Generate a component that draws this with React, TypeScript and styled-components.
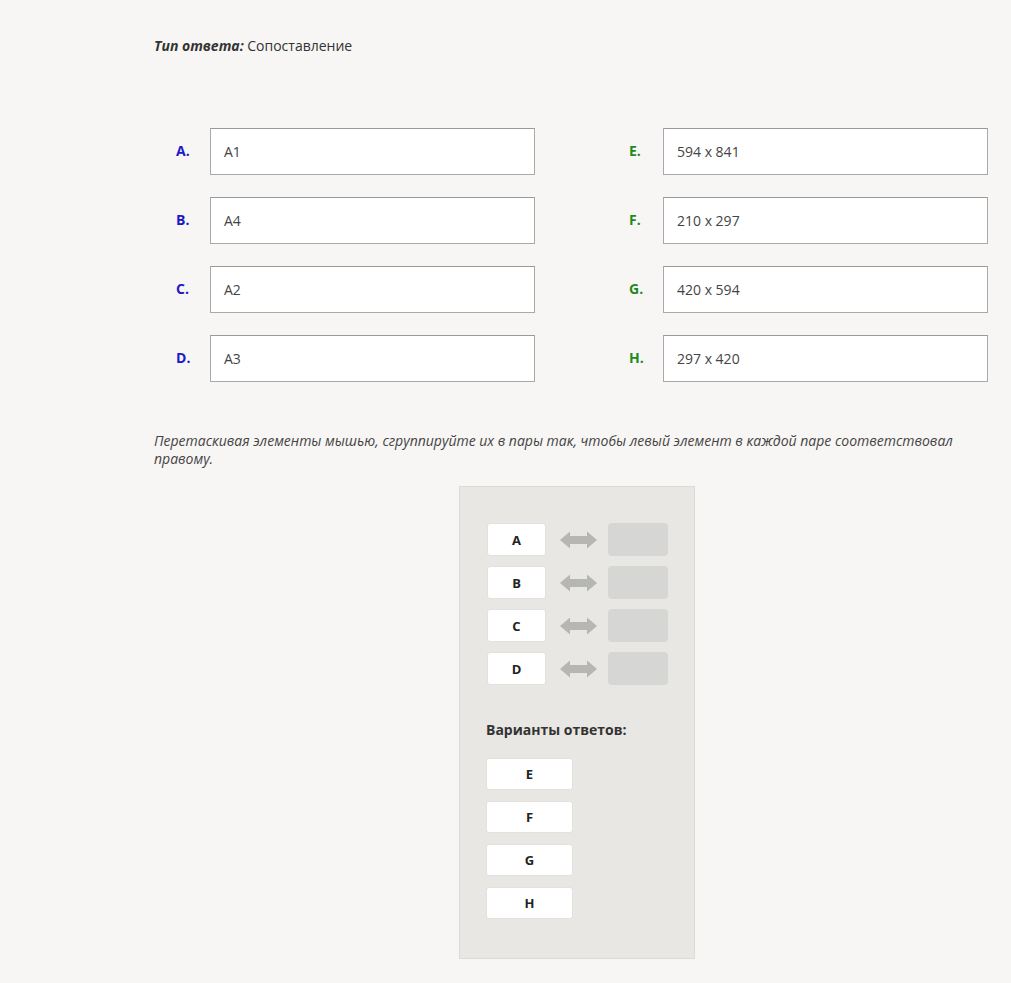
import React from "react";
import styled, { createGlobalStyle } from "styled-components";

const GlobalStyle = createGlobalStyle`
  html, body {
    margin: 0;
    padding: 0;
    background: #f7f6f4;
  }
  body {
    font-family: "Open Sans", "Liberation Sans", sans-serif;
    color: #333;
  }
`;

const Page = styled.div`
  width: 1011px;
  padding: 37px 0 24px 154px;
  box-sizing: border-box;
`;

const AnswerType = styled.div`
  font-size: 14px;
  line-height: 18px;
  color: #333;

  & > b {
    font-style: italic;
    font-weight: 700;
  }
`;

const Options = styled.div`
  display: grid;
  grid-template-columns: 381px 381px;
  column-gap: 72px;
  row-gap: 22px;
  margin-top: 73px;
`;

const Option = styled.div`
  display: flex;
  align-items: center;
  padding-left: 22px;
`;

const Letter = styled.span<{ $tone: "left" | "right" }>`
  width: 34px;
  margin-top: -2px;
  font-size: 14px;
  font-weight: 700;
  color: ${(p) => (p.$tone === "left" ? "#1a1ac8" : "#1e8a1e")};
`;

const Field = styled.div`
  flex: 1;
  height: 47px;
  box-sizing: border-box;
  border: 1px solid #a9a9a9;
  border-top-color: #9a9a9a;
  background: #fff;
  display: flex;
  align-items: center;
  padding-left: 13px;
  font-size: 14px;
  color: #444;
`;

const Hint = styled.p`
  margin: 50px 0 0;
  width: 805px;
  font-size: 14px;
  line-height: 18px;
  font-style: italic;
  color: #444;
`;

const Board = styled.div`
  width: 236px;
  margin: 18px 0 0 305px;
  box-sizing: border-box;
  background: #e8e7e4;
  border: 1px solid #dcdbd8;
  padding: 36px 0 39px 27px;
`;

const Pairs = styled.div`
  display: flex;
  flex-direction: column;
  gap: 10px;
`;

const Pair = styled.div`
  display: flex;
  align-items: center;
`;

const Chip = styled.div<{ $w: number; $h: number }>`
  width: ${(p) => p.$w}px;
  height: ${(p) => p.$h}px;
  box-sizing: border-box;
  background: #fff;
  border: 1px solid #e2e1de;
  border-radius: 3px;
  display: flex;
  align-items: center;
  justify-content: center;
  font-size: 13px;
  font-weight: 700;
  color: #222;
`;

const Slot = styled.div`
  width: 60px;
  height: 33px;
  background: #d6d6d5;
  border-radius: 4px;
`;

const ArrowBox = styled.div`
  width: 37px;
  margin: 0 11px 0 14px;
  display: flex;
  align-items: center;
`;

const Heading = styled.div`
  margin-top: 35px;
  margin-left: -1px;
  font-size: 14px;
  font-weight: 700;
  color: #333;
`;

const Answers = styled.div`
  display: flex;
  flex-direction: column;
  gap: 11px;
  margin-top: 19px;
  margin-left: -1px;
`;

const Arrow = () => (
  <svg width="37" height="20" viewBox="0 0 37 20">
    <polygon
      points="0,10 10,1.5 10,6 27,6 27,1.5 37,10 27,18.5 27,14 10,14 10,18.5"
      fill="#b6b6b5"
    />
  </svg>
);

const left = [
  ["A", "A1"],
  ["B", "A4"],
  ["C", "A2"],
  ["D", "A3"],
];
const right = [
  ["E", "594 x 841"],
  ["F", "210 x 297"],
  ["G", "420 x 594"],
  ["H", "297 x 420"],
];

export default function App() {
  return (
    <Page>
      <GlobalStyle />
      <AnswerType>
        <b>Тип ответа:</b> Сопоставление
      </AnswerType>

      <Options>
        {left.map((l, i) => (
          <React.Fragment key={l[0]}>
            <Option>
              <Letter $tone="left">{l[0]}.</Letter>
              <Field>{l[1]}</Field>
            </Option>
            <Option>
              <Letter $tone="right">{right[i][0]}.</Letter>
              <Field>{right[i][1]}</Field>
            </Option>
          </React.Fragment>
        ))}
      </Options>

      <Hint>
        Перетаскивая элементы мышью, сгруппируйте их в пары так, чтобы левый
        элемент в каждой паре соответствовал правому.
      </Hint>

      <Board>
        <Pairs>
          {left.map((l) => (
            <Pair key={l[0]}>
              <Chip $w={59} $h={33}>
                {l[0]}
              </Chip>
              <ArrowBox>
                <Arrow />
              </ArrowBox>
              <Slot />
            </Pair>
          ))}
        </Pairs>
        <Heading>Варианты ответов:</Heading>
        <Answers>
          {right.map((r) => (
            <Chip key={r[0]} $w={87} $h={32}>
              {r[0]}
            </Chip>
          ))}
        </Answers>
      </Board>
    </Page>
  );
}
